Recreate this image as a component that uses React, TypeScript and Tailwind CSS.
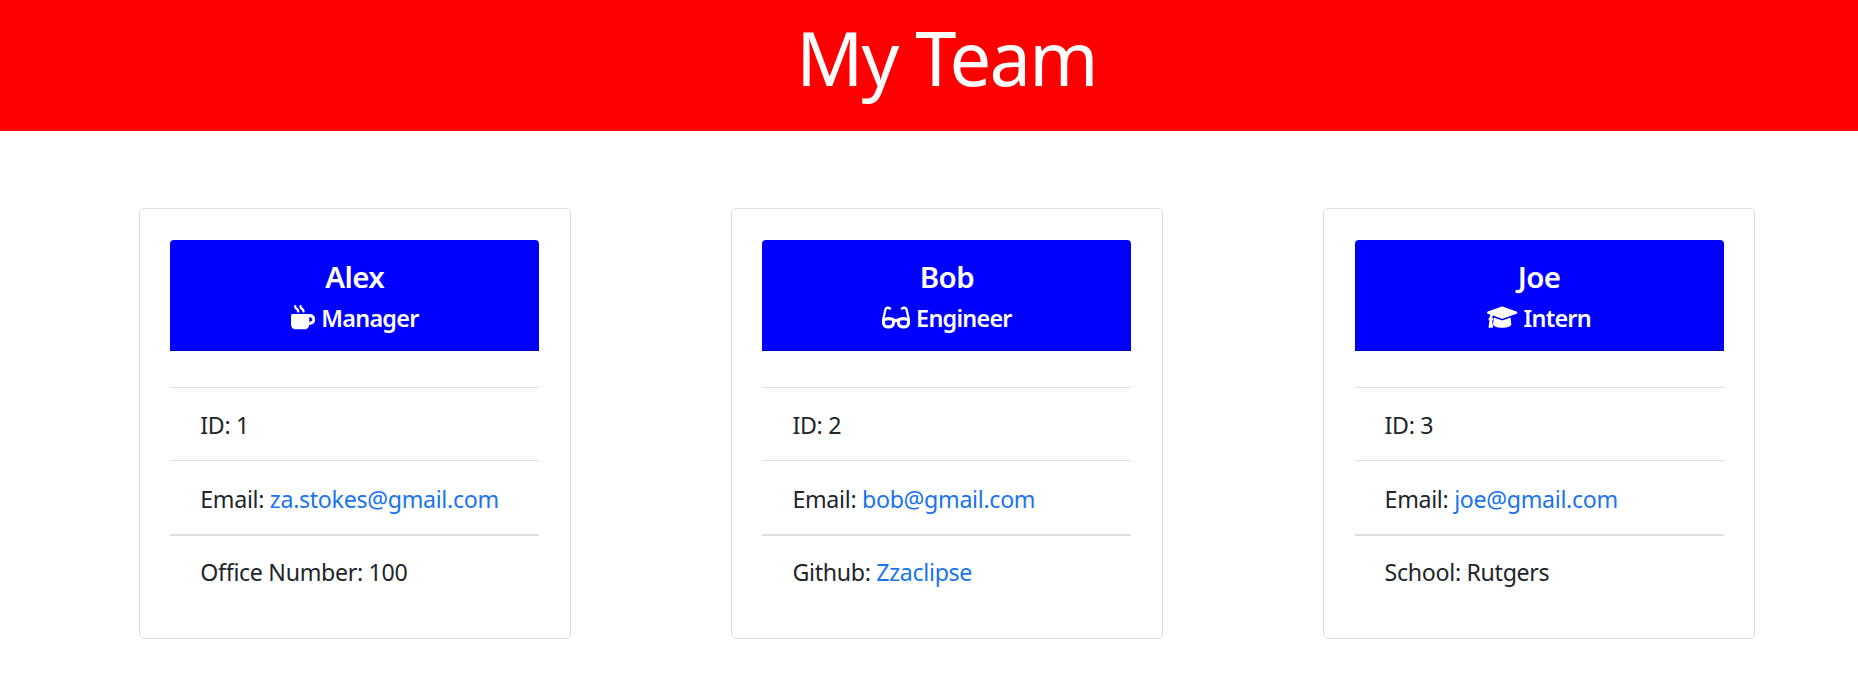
import React from "react";
import { FaMugHot, FaGlasses } from "react-icons/fa6";

type Row = { label: string; value: string; link?: boolean };
type Member = { name: string; role: string; icon: React.ReactNode; rows: Row[] };

function GraduationCap() {
  return (
    <svg viewBox="0 0 640 512" fill="currentColor" className="h-[24.3px] w-[30.4px]">
      <path d="M623.1 136.9L341.4 35.7c-13.7-4.9-29-4.9-42.8 0L16 136.9C6 140.8 0 149.9 0 160s6 19.2 16 23.1l57 20.4c-11.800 16.800-17.600 37-18.800 59.300C41.100 268.500 32 281 32 296c0 14 7.900 26 19.400 32.400L33 461.300C31.500 471 38 480 48.600 480h62.800c10.600 0 17.100-9 15.600-18.700L108.600 328.400C120.100 322 128 310 128 296c0-13.500-7.300-25-18-31.600 1.400-18 8-33.600 18.800-41.400l169.800 61.300c13.700 4.900 29 4.900 42.800 0l282.700-101.200C634 179.200 640 170.100 640 160s-6-19.200-16.900-23.100z" />
      <path d="M351.100 314.400c-10 3.600-20.500 5.600-31.100 5.600s-21.100-2-31.100-5.600L142.500 261.700 128 405.100C128 446.400 214 480 320 480s192-33.600 192-74.900l-14.500-143.400z" />
    </svg>
  );
}

const team: Member[] = [
  { name: "Alex", role: "Manager", icon: <FaMugHot className="h-[24.3px] w-[24.3px]" />, rows: [
    { label: "ID:", value: "1" },
    { label: "Email:", value: "za.stokes@gmail.com", link: true },
    { label: "Office Number:", value: "100" },
  ] },
  { name: "Bob", role: "Engineer", icon: <FaGlasses className="h-[25px] w-[28px]" />, rows: [
    { label: "ID:", value: "2" },
    { label: "Email:", value: "bob@gmail.com", link: true },
    { label: "Github:", value: "Zzaclipse", link: true },
  ] },
  { name: "Joe", role: "Intern", icon: <GraduationCap />, rows: [
    { label: "ID:", value: "3" },
    { label: "Email:", value: "joe@gmail.com", link: true },
    { label: "School:", value: "Rutgers" },
  ] },
];

const rowStyles = [
  "h-[73px] border-t pt-[18px]",
  "h-[74px] border-t pt-[19px]",
  "h-[74px] border-t-2 pt-[17px]",
];

export default function App() {
  return (
    <div className="min-h-[684px] bg-white font-['Noto_Sans',sans-serif] text-[#212529]">
      <header className="flex h-[131px] justify-center bg-[#ff0000] pl-[35px] pt-[15px] text-white">
        <h1 className="text-[74px] font-normal leading-[86px] tracking-[-1.7px]">My Team</h1>
      </header>
      <main className="flex gap-[160.55px] pl-[139px] pt-[77px]">
        {team.map((m) => (
          <section key={m.name} className="h-[431px] w-[431.6px] shrink-0 rounded-[5px] border border-[#dfdfdf] px-[30.3px] pt-[31px]">
            <div className="flex h-[111px] flex-col items-center rounded-t-[4px] border-b border-black/25 bg-[#0000ff] pt-[17px] text-white">
              <h2 className="text-[29.5px] font-semibold leading-[40px] tracking-[-0.6px]">{m.name}</h2>
              <h3 className="flex items-center gap-[6px] text-[23.4px] font-semibold leading-[40px] tracking-[-0.75px]">
                {m.icon}
                <span className="pt-px">{m.role}</span>
              </h3>
            </div>
            <ul className="mt-9">
              {m.rows.map((r, i) => (
                <li key={r.label} className={`border-[#dfdfdf] pl-[30px] text-[23.2px] leading-[38px] tracking-[-0.32px] ${rowStyles[i]}`}>
                  {r.label} {r.link ? <a className="text-[#1a73f0]">{r.value}</a> : r.value}
                </li>
              ))}
            </ul>
          </section>
        ))}
      </main>
    </div>
  );
}
